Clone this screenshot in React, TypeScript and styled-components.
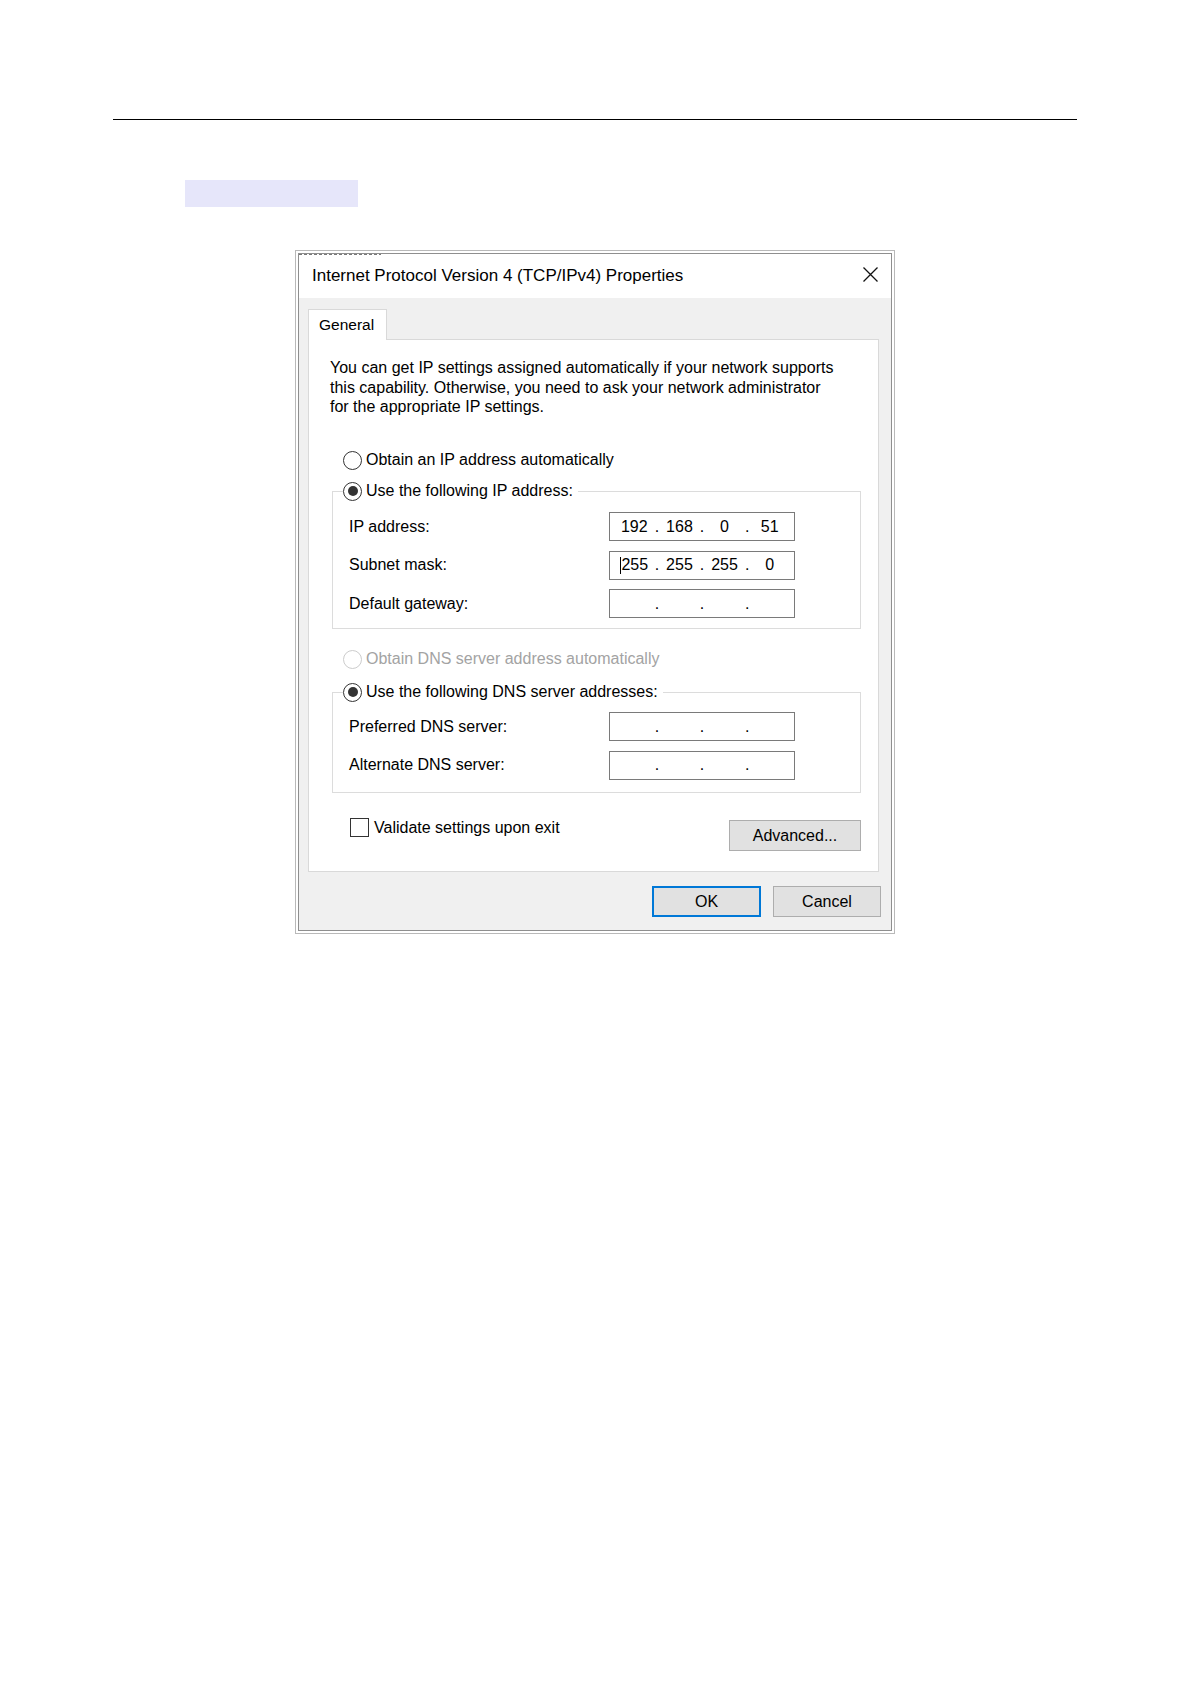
import React from "react";
import styled, { createGlobalStyle, css } from "styled-components";

const GlobalStyle = createGlobalStyle`
  html, body {
    margin: 0;
    padding: 0;
    background: #fff;
  }
  body {
    font-family: "Liberation Sans", Arial, sans-serif;
    color: #000;
  }
  * {
    box-sizing: border-box;
  }
`;

const Page = styled.div`
  width: 1191px;
  min-height: 1684px;
  padding-top: 119px;
`;

const Rule = styled.div`
  margin-left: 113px;
  width: 964px;
  height: 1px;
  background: #000;
`;

const Highlight = styled.div`
  margin: 60px 0 0 185px;
  width: 173px;
  height: 27px;
  background: #e6e6fa;
`;

const Dialog = styled.div`
  margin: 43px 0 0 295px;
  width: 600px;
  height: 684px;
  border: 1px solid #b9b9b9;
  padding: 2px;
  background: #fff;
`;

const Frame = styled.div`
  height: 100%;
  border: 1px solid #8f8f8f;
  background: #f0f0f0;
  display: flex;
  flex-direction: column;
`;

const TitleBar = styled.div`
  position: relative;
  height: 44px;
  flex-shrink: 0;
  background: #fff;
  display: flex;
  align-items: center;
  justify-content: space-between;
  padding: 0 13px;

  &::before {
    content: "";
    position: absolute;
    top: 0;
    left: 0;
    width: 82px;
    height: 1px;
    background: repeating-linear-gradient(90deg, #777 0 3px, transparent 3px 5px);
  }

  svg {
    margin-top: -3px;
  }
`;

const Title = styled.span`
  font-size: 17px;
  color: #000;
`;

const CloseIcon = () => (
  <svg width="15" height="15" viewBox="0 0 15 15">
    <path d="M0.5 0.5 L14.5 14.5 M14.5 0.5 L0.5 14.5" stroke="#111" strokeWidth="1.3" fill="none" />
  </svg>
);

const Body = styled.div`
  flex: 1;
  padding: 11px 10px 0 9px;
  display: flex;
  flex-direction: column;
`;

const TabStrip = styled.div`
  display: flex;
`;

const Tab = styled.div`
  position: relative;
  z-index: 1;
  width: 79px;
  height: 31px;
  margin-bottom: -1px;
  background: #fff;
  border: 1px solid #d9d9d9;
  border-bottom: 0;
  padding-left: 10px;
  font-size: 15.5px;
  line-height: 29px;
`;

const Panel = styled.div`
  width: 571px;
  height: 533px;
  background: #fff;
  border: 1px solid #d9d9d9;
  padding: 18px 17px 0 21px;
`;

const Intro = styled.p`
  margin: 0;
  font-size: 16px;
  line-height: 19.5px;
  white-space: nowrap;
`;

const RadioRow = styled.label<{ $top?: number; $inset?: number; $disabled?: boolean }>`
  display: flex;
  align-items: center;
  gap: 4px;
  height: 24px;
  margin-top: ${(p) => p.$top ?? 0}px;
  margin-left: ${(p) => p.$inset ?? 0}px;
  font-size: 16px;
  color: ${(p) => (p.$disabled ? "#a3a3a3" : "#000")};
  white-space: nowrap;
`;

const RadioCircle = styled.span<{ $checked?: boolean; $disabled?: boolean }>`
  width: 19px;
  height: 19px;
  border-radius: 50%;
  border: 1px solid ${(p) => (p.$disabled ? "#cccccc" : "#333")};
  background: #fff;
  display: grid;
  place-items: center;
  flex-shrink: 0;

  ${(p) =>
    p.$checked &&
    css`
      &::after {
        content: "";
        width: 10px;
        height: 10px;
        border-radius: 50%;
        background: #333;
      }
    `}
`;

const Group = styled.fieldset<{ $top: number; $padTop: number; $padBottom: number }>`
  margin: ${(p) => p.$top}px 0 0 2px;
  padding: ${(p) => p.$padTop}px 10px ${(p) => p.$padBottom}px 10px;
  width: 529px;
  min-width: 0;
  border: 1px solid #dcdcdc;
`;

const Legend = styled.legend`
  padding: 0 5px 0 0;
  margin: 0;
`;

const FieldGrid = styled.div`
  display: grid;
  grid-template-columns: 260px 186px;
  row-gap: 9.5px;
  margin-left: 6px;
`;

const FieldLabel = styled.span`
  align-self: center;
  font-size: 16px;
  white-space: nowrap;
`;

const IpField = styled.div`
  height: 29px;
  border: 1px solid #7a7a7a;
  background: #fff;
  display: grid;
  grid-template-columns: 1fr auto 1fr auto 1fr auto 1fr;
  align-items: center;
  padding: 0 4px;
  font-size: 16px;
`;

const Octet = styled.span`
  text-align: center;
  white-space: nowrap;
`;

const Dot = styled.span`
  width: 4.5px;
  text-align: center;
`;

const Caret = styled.span`
  display: inline-block;
  width: 1px;
  height: 17px;
  background: #000;
  vertical-align: middle;
`;

const BottomRow = styled.div`
  display: flex;
  justify-content: space-between;
  align-items: flex-start;
  margin-top: 25px;
`;

const CheckRow = styled.label`
  display: flex;
  align-items: center;
  gap: 5px;
  height: 20px;
  margin-left: 20px;
  font-size: 16px;
  white-space: nowrap;
`;

const CheckBox = styled.span`
  width: 19px;
  height: 19px;
  border: 1px solid #333;
  background: #fff;
  flex-shrink: 0;
`;

const Button = styled.button<{ $width: number; $primary?: boolean; $top?: number }>`
  width: ${(p) => p.$width}px;
  height: 31px;
  margin-top: ${(p) => p.$top ?? 0}px;
  padding: 0;
  background: #e1e1e1;
  border: ${(p) => (p.$primary ? "2px solid #0078d7" : "1px solid #adadad")};
  font-family: "Liberation Sans", Arial, sans-serif;
  font-size: 16px;
  color: #000;
`;

const Footer = styled.div`
  display: flex;
  justify-content: flex-end;
  gap: 12px;
  margin-top: 14px;
`;

type Ip = [string, string, string, string];

const IpInput = ({ value, caret }: { value: Ip; caret?: boolean }) => (
  <IpField>
    {value.map((part, i) => (
      <React.Fragment key={i}>
        <Octet>
          {caret && i === 0 && <Caret />}
          {part}
        </Octet>
        {i < 3 && <Dot>.</Dot>}
      </React.Fragment>
    ))}
  </IpField>
);

const Radio = ({
  label,
  checked,
  disabled,
  top,
  inset,
}: {
  label: string;
  checked?: boolean;
  disabled?: boolean;
  top?: number;
  inset?: number;
}) => (
  <RadioRow $top={top} $inset={inset} $disabled={disabled}>
    <RadioCircle $checked={checked} $disabled={disabled} />
    {label}
  </RadioRow>
);

const empty: Ip = ["", "", "", ""];

const ipRows: { label: string; value: Ip; caret?: boolean }[] = [
  { label: "IP address:", value: ["192", "168", "0", "51"] },
  { label: "Subnet mask:", value: ["255", "255", "255", "0"], caret: true },
  { label: "Default gateway:", value: empty },
];

const dnsRows: { label: string; value: Ip }[] = [
  { label: "Preferred DNS server:", value: empty },
  { label: "Alternate DNS server:", value: empty },
];

export default function App() {
  return (
    <>
      <GlobalStyle />
      <Page>
        <Rule />
        <Highlight />
        <Dialog>
          <Frame>
            <TitleBar>
              <Title>Internet Protocol Version 4 (TCP/IPv4) Properties</Title>
              <CloseIcon />
            </TitleBar>
            <Body>
              <TabStrip>
                <Tab>General</Tab>
              </TabStrip>
              <Panel>
                <Intro>
                  You can get IP settings assigned automatically if your network supports
                  <br />
                  this capability. Otherwise, you need to ask your network administrator
                  <br />
                  for the appropriate IP settings.
                </Intro>

                <Radio label="Obtain an IP address automatically" top={31.5} inset={13} />

                <Group $top={7} $padTop={9} $padBottom={10}>
                  <Legend>
                    <Radio label="Use the following IP address:" checked />
                  </Legend>
                  <FieldGrid>
                    {ipRows.map((row) => (
                      <React.Fragment key={row.label}>
                        <FieldLabel>{row.label}</FieldLabel>
                        <IpInput value={row.value} caret={row.caret} />
                      </React.Fragment>
                    ))}
                  </FieldGrid>
                </Group>

                <Radio label="Obtain DNS server address automatically" top={18} inset={13} disabled />

                <Group $top={9} $padTop={8} $padBottom={12}>
                  <Legend>
                    <Radio label="Use the following DNS server addresses:" checked />
                  </Legend>
                  <FieldGrid>
                    {dnsRows.map((row) => (
                      <React.Fragment key={row.label}>
                        <FieldLabel>{row.label}</FieldLabel>
                        <IpInput value={row.value} />
                      </React.Fragment>
                    ))}
                  </FieldGrid>
                </Group>

                <BottomRow>
                  <CheckRow>
                    <CheckBox />
                    Validate settings upon exit
                  </CheckRow>
                  <Button $width={132} $top={2.5}>
                    Advanced...
                  </Button>
                </BottomRow>
              </Panel>
              <Footer>
                <Button $width={109} $primary>
                  OK
                </Button>
                <Button $width={108}>Cancel</Button>
              </Footer>
            </Body>
          </Frame>
        </Dialog>
      </Page>
    </>
  );
}
